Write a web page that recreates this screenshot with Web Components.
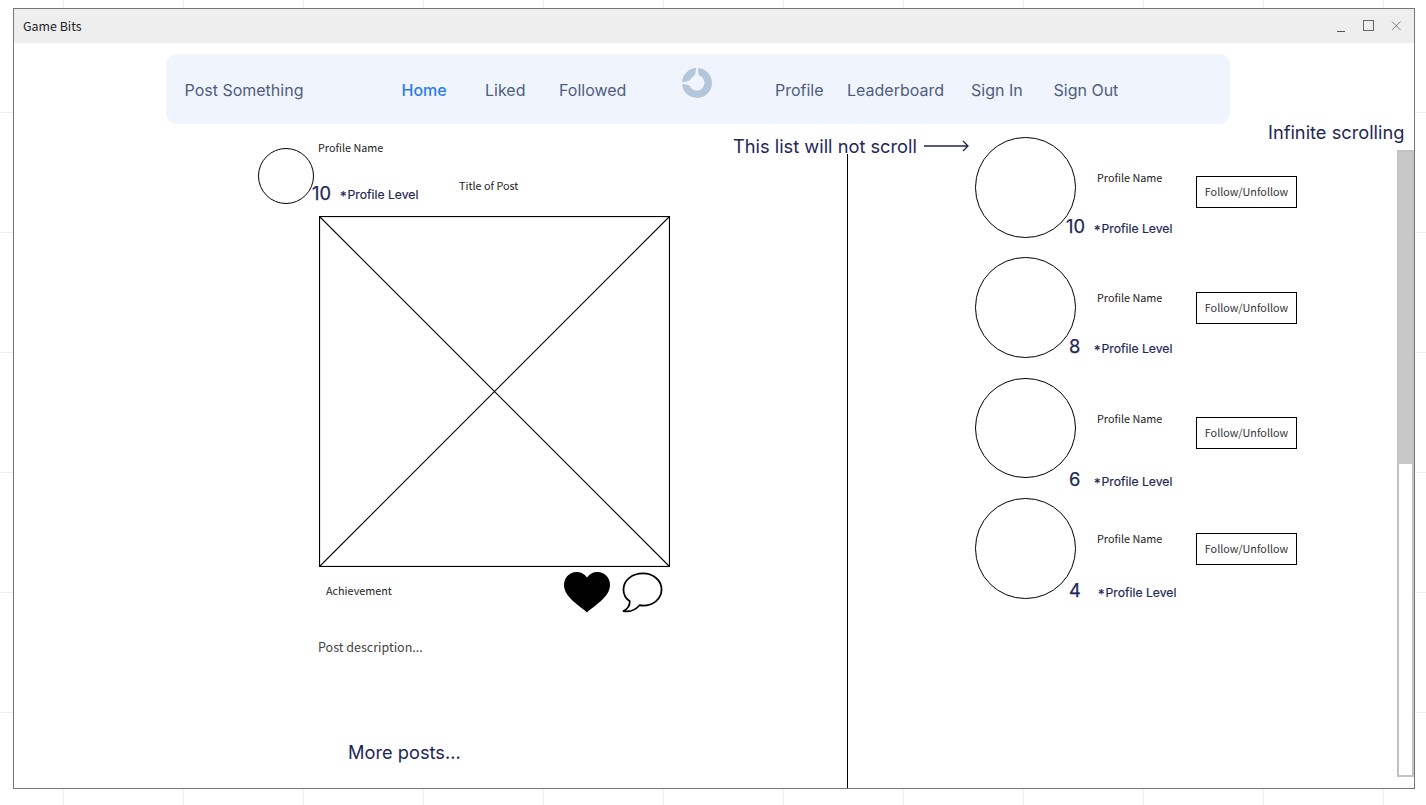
<!DOCTYPE html>
<html>
<head>
<meta charset="utf-8">
<title>Game Bits</title>
<style>
  html, body { margin: 0; height: 100%; }
  body {
    height: 805px;
    overflow: hidden;
    padding: 8px 11px 0 13px;
    box-sizing: border-box;
    background-color: #fff;
    background-image:
      linear-gradient(to right, #efefef 1px, transparent 1px),
      linear-gradient(to bottom, #efefef 1px, transparent 1px);
    background-size: 120px 120px;
    background-position: 63px 112px;
    font-family: "Noto Sans CJK JP", "Noto Sans", sans-serif;
  }
</style>
</head>
<body>
<app-window heading="Game Bits">
  <nav-bar></nav-bar>
  <main-area>
    <post-card slot="feed"></post-card>
    <profile-row slot="list" name="Profile Name" score="10" level="Profile Level" style="--btn-top:39px;--num-top:78px;--num-left:91px;--lvl-top:84px;--lvl-left:119px"></profile-row>
    <profile-row slot="list" name="Profile Name" score="8" level="Profile Level" style="--btn-top:35px;--num-top:78px;--num-left:94px;--lvl-top:84px;--lvl-left:119px"></profile-row>
    <profile-row slot="list" name="Profile Name" score="6" level="Profile Level" style="--btn-top:39px;--num-top:90px;--num-left:94px;--lvl-top:96px;--lvl-left:119px"></profile-row>
    <profile-row slot="list" name="Profile Name" score="4" level="Profile Level" style="--btn-top:35px;--num-top:81px;--num-left:94px;--lvl-top:87px;--lvl-left:123px"></profile-row>
  </main-area>
</app-window>

<script>
class AppWindow extends HTMLElement {
  constructor() {
    super();
    this.attachShadow({ mode: 'open' });
    this.shadowRoot.innerHTML = `
      <style>
        :host {
          display: flex;
          flex-direction: column;
          width: 1402px;
          height: 781px;
          box-sizing: border-box;
          border: 1px solid #777;
          background: #fff;
        }
        .title {
          flex: none;
          height: 34px;
          background: #eeeeee;
          display: flex;
          align-items: center;
          padding: 0 12px 0 9px;
          font: 12.400px/18px "Noto Sans CJK JP", "Noto Sans", sans-serif;
          color: #222;
        }
        .title span { flex: 1; }
        .title svg { display: block; }
      </style>
      <div class="title">
        <span></span>
        <svg width="66" height="14" viewBox="0 0 66 14" fill="none" stroke="#666" stroke-width="1">
          <path d="M1 12.5h8" stroke="#555"/>
          <rect x="27.5" y="1.5" width="10" height="10"/>
          <path d="M56 2.5l8.500 8.500M64.500 2.500L56 11" stroke-width=".8"/>
        </svg>
      </div>
      <slot></slot>
    `;
    this.shadowRoot.querySelector('span').textContent = this.getAttribute('heading');
  }
}
customElements.define('app-window', AppWindow);

class NavBar extends HTMLElement {
  constructor() {
    super();
    this.attachShadow({ mode: 'open' });
    this.shadowRoot.innerHTML = `
      <style>
        :host {
          display: grid;
          grid-template-columns: 217px 83.500px 74px 123px 93px 72px 124px 82.500px auto;
          align-items: center;
          flex: none;
          height: 70px;
          margin: 11px 0 0 152px;
          width: 1064px;
          box-sizing: border-box;
          padding: 2px 0 0 18.500px;
          border-radius: 11px;
          background: #f0f4fc;
          font: 400 16px/20px Inter, sans-serif;
          color: #4f5d7e;
        }
        a { white-space: nowrap; }
        .on { color: #2b7de9; font-weight: 500; }
        svg { display: block; margin-top: -14px; }
      </style>
      <a>Post Something</a>
      <a class="on">Home</a>
      <a>Liked</a>
      <a>Followed</a>
      <svg width="30" height="30" viewBox="0 0 30 30">
        <circle cx="15" cy="15" r="15" fill="#b3c6da"/>
        <path d="M14 -.5C14 3 13.500 5.500 12 7.900A7.700 7.700 0 0 0 7.900 12.300C5.500 13.700 3 14 -.5 14.200L-.5 16.300C3 16.200 5.500 16.500 7.500 17.500A7.700 7.700 0 1 0 17 7.500C16.200 5.500 16 3 16.300 -.5Z" fill="#f0f4fc"/>
      </svg>
      <a>Profile</a>
      <a>Leaderboard</a>
      <a>Sign In</a>
      <a>Sign Out</a>
    `;
  }
}
customElements.define('nav-bar', NavBar);

class MainArea extends HTMLElement {
  constructor() {
    super();
    this.attachShadow({ mode: 'open' });
    this.shadowRoot.innerHTML = `
      <style>
        :host {
          display: grid;
          grid-template-columns: 833px 1px 1fr;
          flex: 1;
          min-height: 0;
          position: relative;
          color: #1e2756;
          font: 400 18.250px/22px Inter, sans-serif;
        }
        .feed { padding: 17px 0 0 244px; }
        .rule { background: #000; margin-top: 30px; }
        .list {
          display: flex;
          flex-direction: column;
          padding: 13px 0 0 127px;
        }
        .note { position: absolute; white-space: nowrap; }
        .note.stay { left: 719px; top: 11px; display: flex; align-items: center; gap: 7px; }
        .note.stay svg { display: block; }
        .note.inf { left: 1254px; top: -3px; }
        .bar {
          position: absolute;
          left: 1383px;
          top: 26px;
          width: 17px;
          height: 627px;
          box-sizing: border-box;
          border: 2px solid #c2c2c2;
          background: #fff;
        }
        .thumb { height: 312px; background: #c8c8c8; }
      </style>
      <div class="feed"><slot name="feed"></slot></div>
      <div class="rule"></div>
      <div class="list"><slot name="list"></slot></div>
      <div class="note stay">This list will not scroll
        <svg width="45" height="12" viewBox="0 0 45 12" fill="none" stroke="#1e2756" stroke-width="1.300"><path d="M0 6h44M39 1l5 5-5 5"/></svg>
      </div>
      <div class="note inf">Infinite scrolling</div>
      <div class="bar"><div class="thumb"></div></div>
    `;
  }
}
customElements.define('main-area', MainArea);

class PostCard extends HTMLElement {
  constructor() {
    super();
    this.attachShadow({ mode: 'open' });
    this.shadowRoot.innerHTML = `
      <style>
        :host { display: block; width: 420px; }
        .head {
          display: grid;
          grid-template-columns: 54px 28px 119px 1fr;
          grid-template-rows: 14px 61px;
          align-items: start;
        }
        .avatar {
          grid-row: 1 / 3;
          width: 54px;
          height: 54px;
          margin-top: 7px;
          border: 1px solid #000;
          border-radius: 50%;
        }
        .name, .title, .ach {
          font: 400 10.800px/14px "Noto Sans CJK JP", "Noto Sans", sans-serif;
          color: #222;
          white-space: nowrap;
        }
        .name { grid-column: 2 / 4; margin: -1px 0 0 6px; }
        .num { grid-column: 2; grid-row: 2; margin-top: 27px; color: #1e2756; -webkit-text-stroke: .25px #1e2756; }
        .lvl { grid-column: 3; grid-row: 2; margin-top: 32px; font-size: 12.200px; line-height: 16px; white-space: nowrap; -webkit-text-stroke: .2px #1e2756; }
        .lvl i { font-style: normal; font-size: 13px; vertical-align: -2px; margin-right: 1px; }
        .title { grid-column: 4; grid-row: 2; margin-top: 23px; }
        .pic { display: block; margin-left: 61px; }
        .foot {
          display: flex;
          align-items: center;
          margin: 5px 0 0 68px;
          height: 41px;
          width: 337px;
        }
        .ach { flex: 1; margin-top: -5px; }
        .foot svg { display: block; }
        .desc {
          margin: 25px 0 0 60px;
          font: 400 12.500px/18px "Noto Sans CJK JP", "Noto Sans", sans-serif;
          color: #444;
        }
        .more { margin: 85px 0 0 90px; }
      </style>
      <div class="head">
        <div class="avatar"></div>
        <div class="name">Profile Name</div>
        <div class="num">10</div>
        <div class="lvl"><i>*</i>Profile Level</div>
        <div class="title">Title of Post</div>
      </div>
      <svg class="pic" width="351" height="351" viewBox="0 0 351 351" fill="none" stroke="#000">
        <rect x=".5" y=".5" width="350" height="350" stroke-width="1.200"/>
        <path d="M.5 .5L350.500 350.500M350.500 .5L.5 350.500" stroke-width="1.100"/>
      </svg>
      <div class="foot">
        <span class="ach">Achievement</span>
        <svg style="margin-top:-1px" width="46" height="41" viewBox="0 0 46 41"><path d="M23 40.500C17 34.500 0 25.500 0 13C0 5.500 5.500 0 12.500 0C17 0 20.800 2 23 5.500C25.200 2 29 0 33.500 0C40.500 0 46 5.500 46 13C46 25.500 29 34.500 23 40.500Z" fill="#000"/></svg>
        <svg style="margin-left:12px" width="41" height="41" viewBox="0 0 42 41" fill="none" stroke="#000" stroke-width="1.800" stroke-linejoin="round"><path d="M21.500 1C11 1 1.500 7.500 1.500 17.500C1.500 22.500 4 27 8 29.500C8 33.500 5.500 37.500 1.500 39.500C8 40.500 14.500 38 18 33.500C19.500 33.800 20.500 34 21.500 34C32 34 40.500 27 40.500 17.500C40.500 8 32 1 21.500 1Z"/></svg>
      </div>
      <div class="desc">Post description...</div>
      <div class="more">More posts...</div>
    `;
  }
}
customElements.define('post-card', PostCard);

class ProfileRow extends HTMLElement {
  constructor() {
    super();
    this.attachShadow({ mode: 'open' });
    this.shadowRoot.innerHTML = `
      <style>
        :host {
          display: grid;
          grid-template-columns: 122px 99px 101px;
          height: 100px;
          margin-bottom: 20.400px;
          align-items: start;
        }
        .avatar {
          grid-area: 1 / 1 / 2 / 2;
          width: 100.500px;
          height: 100.500px;
          box-sizing: border-box;
          border: 1px solid #000;
          border-radius: 50%;
        }
        .num {
          grid-area: 1 / 1 / 2 / 2;
          margin: var(--num-top) 0 0 var(--num-left);
          color: #1e2756;
          -webkit-text-stroke: .25px #1e2756;
        }
        .lvl {
          grid-area: 1 / 1 / 2 / 3;
          margin: var(--lvl-top) 0 0 var(--lvl-left);
          font-size: 12.200px;
          line-height: 16px;
          white-space: nowrap;
          -webkit-text-stroke: .2px #1e2756;
        }
        .lvl i { font-style: normal; font-size: 13px; vertical-align: -2px; margin-right: 1px; }
        .name {
          grid-area: 1 / 2;
          margin-top: 33px;
          font: 400 10.800px/14px "Noto Sans CJK JP", "Noto Sans", sans-serif;
          color: #222;
          white-space: nowrap;
        }
        button {
          grid-area: 1 / 3;
          margin-top: var(--btn-top);
          width: 101px;
          height: 32px;
          padding: 0 0 2px;
          box-sizing: border-box;
          border: 1px solid #000;
          border-radius: 0;
          background: #fff;
          font: 400 10.800px/14px "Noto Sans CJK JP", "Noto Sans", sans-serif;
          color: #333;
        }
      </style>
      <div class="avatar"></div>
      <div class="num"></div>
      <div class="lvl"><i>*</i><span></span></div>
      <div class="name"></div>
      <button>Follow/Unfollow</button>
    `;
    this.shadowRoot.querySelector('.num').textContent = this.getAttribute('score');
    this.shadowRoot.querySelector('.lvl span').textContent = this.getAttribute('level');
    this.shadowRoot.querySelector('.name').textContent = this.getAttribute('name');
  }
}
customElements.define('profile-row', ProfileRow);
</script>
</body>
</html>
